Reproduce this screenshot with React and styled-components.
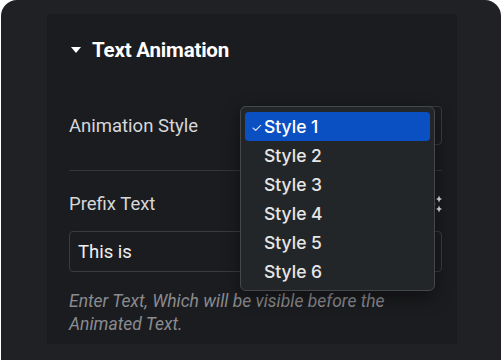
import React from "react";
import styled, { createGlobalStyle } from "styled-components";

const styles = ["Style 1", "Style 2", "Style 3", "Style 4", "Style 5", "Style 6"];

export default function App() {
    return (
        <>
            <GlobalStyle />
            <Frame>
                <Panel>
                    <Heading>
                        <Caret />
                        Text Animation
                    </Heading>
                    <ControlRow>
                        <Label>Animation Style</Label>
                        <SelectBox>
                            <Menu>
                                {styles.map((s, i) => (
                                    <MenuItem key={s} active={i === 0}>
                                        {i === 0 && <Check>✓</Check>}
                                        {s}
                                    </MenuItem>
                                ))}
                            </Menu>
                        </SelectBox>
                    </ControlRow>
                    <Separator />
                    <LabelRow>
                        <Label>Prefix Text</Label>
                        <DynamicIcon />
                    </LabelRow>
                    <TextInput>This is</TextInput>
                    <Help>
                        Enter Text, Which will be visible before the
                        <br />
                        Animated Text.
                    </Help>
                </Panel>
            </Frame>
        </>
    );
}

function DynamicIcon() {
    return (
        <svg width="10" height="18" viewBox="0 0 10 18">
            <path
                d="M7 0.5 L8 3 L10 4 L8 5 L7 7.5 L6 5 L4 4 L6 3 Z"
                fill="#e8e8e8"
            />
            <path
                d="M7 10.5 L8 13 L10 14 L8 15 L7 17.5 L6 15 L4 14 L6 13 Z"
                fill="#e8e8e8"
            />
            <circle cx="2.5" cy="9" r="1" fill="#8a8b8e" />
        </svg>
    );
}

const GlobalStyle = createGlobalStyle`
    body {
        margin: 0;
        background: #ffffff;
        font-family: Roboto, "Liberation Sans", sans-serif;
    }
`;

const Frame = styled.div`
    margin-left: 1px;
    height: 360px;
    background: #202124;
    border-radius: 16px 16px 0 0;
    padding: 14px 44px 0 46px;
    box-sizing: border-box;
`;

const Panel = styled.div`
    background: #1b1c1f;
    height: 330px;
    padding: 24px 15px 0 22px;
    box-sizing: border-box;
    color: #d6d7d9;
`;

const Heading = styled.div`
    display: flex;
    align-items: center;
    height: 24px;
    font-size: 20.5px;
    font-weight: 700;
    color: #ffffff;
    gap: 11px;
    letter-spacing: -0.2px;
`;

const Caret = styled.span`
    width: 0;
    height: 0;
    margin-left: 2px;
    border-left: 5.5px solid transparent;
    border-right: 5.5px solid transparent;
    border-top: 6px solid #ffffff;
`;

const ControlRow = styled.div`
    display: flex;
    align-items: center;
    justify-content: space-between;
    margin-top: 44px;
    height: 39px;
`;

const Label = styled.div`
    font-size: 18.5px;
    line-height: 20px;
    color: #d6d7d9;
`;

const SelectBox = styled.div`
    position: relative;
    width: 201px;
    height: 39px;
    box-sizing: border-box;
    border: 1px solid #3a3b3f;
    border-radius: 4px;
`;

const Menu = styled.div`
    position: absolute;
    left: -2px;
    top: -1px;
    width: 195px;
    height: 185px;
    box-sizing: border-box;
    padding: 5px 4px;
    background: #232628;
    border: 1px solid #45474a;
    border-radius: 6px;
    box-shadow: 0 6px 18px rgba(0, 0, 0, 0.45);
    z-index: 2;
`;

const MenuItem = styled.div`
    position: relative;
    height: 29px;
    display: flex;
    align-items: center;
    padding-left: 19px;
    border-radius: 4px;
    font-family: Inter, "Noto Sans", sans-serif;
    font-size: 17.5px;
    font-weight: 500;
    color: #e6e6e7;
    background: ${(p) => (p.active ? "#0b50c2" : "transparent")};
    ${(p) => p.active && "color: #ffffff;"}
`;

const Check = styled.span`
    position: absolute;
    left: 6px;
    font-size: 13px;
    font-weight: 300;
`;

const Separator = styled.div`
    margin-top: 25px;
    height: 1px;
    background: #33353a;
`;

const LabelRow = styled.div`
    display: flex;
    align-items: center;
    justify-content: space-between;
    margin-top: 23px;
    height: 20px;
`;

const TextInput = styled.div`
    margin-top: 17px;
    height: 41px;
    box-sizing: border-box;
    border: 1px solid #3a3b3f;
    border-radius: 4px;
    display: flex;
    align-items: center;
    padding-left: 8px;
    font-size: 18.5px;
    color: #f0f0f0;
`;

const Help = styled.div`
    margin-top: 18px;
    font-size: 17.5px;
    line-height: 23px;
    font-style: italic;
    color: #8a8b8f;
`;
